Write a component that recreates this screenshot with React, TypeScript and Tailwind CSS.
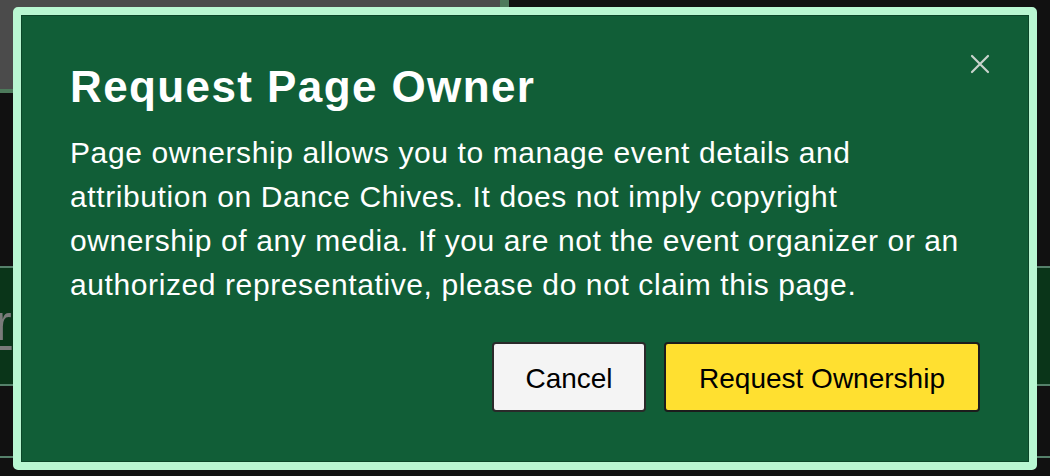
export default function App() {
  return (
    <div className="relative h-[476px] w-[1050px] overflow-hidden bg-[#111111] font-['Liberation_Sans',Arial,sans-serif]">
      {/* page behind the modal */}
      <div className="flex h-[93px]">
        <div className="h-[93px] w-[509px] border-b-4 border-r-[9px] border-[#4d7a5b] bg-[#4b4b4b]" />
        <div className="flex-1" />
      </div>
      <div className="h-[173px]" />
      <div className="flex h-[120px] items-start overflow-hidden border-y-2 border-[#55806a] bg-[#0a3519]">
        <span className="-ml-[5px] mt-[30px] text-[50px] leading-[50px] text-[#7a7a7a] underline decoration-[4px] underline-offset-[6px]">
          r
        </span>
      </div>
      <div className="h-[72px] border-b-2 border-[#55806a]" />

      {/* modal */}
      <div className="absolute left-[13px] top-[7px] flex h-[463px] w-[1024px] flex-col rounded-[5px] border-8 border-[#b9f7d2] bg-[#115e37] px-[49px] pt-[48px] shadow-[inset_0_0_0_1px_rgba(0,0,0,0.25)]">
        <button className="absolute right-[38px] top-[38px] text-[#c9d3cc]">
          <svg width="22" height="22" viewBox="0 0 22 22" fill="none" stroke="currentColor" strokeWidth="2.2" strokeLinecap="round">
            <path d="M3 3l16 16M19 3L3 19" />
          </svg>
        </button>
        <h2 className="text-[44px] font-bold leading-[48px] tracking-[1.4px] text-white">
          Request Page Owner
        </h2>
        <p className="mt-[20px] text-[30px] leading-[44px] tracking-[0.6px] text-white">
          Page ownership allows you to manage event details and attribution on Dance Chives. It does not imply copyright ownership of any media. If you are not the event organizer or an authorized representative, please do not claim this page.
        </p>
        <div className="mt-[35px] flex justify-end gap-[18px]">
          <button className="h-[70px] w-[154px] rounded-[4px] border-2 border-[#2a2a2a] bg-[#f4f4f4] pt-[3px] text-[28px] text-black">
            Cancel
          </button>
          <button className="h-[70px] w-[316px] rounded-[4px] border-2 border-[#1c1c1c] bg-[#ffe030] pt-[3px] text-[28px] text-black">
            Request Ownership
          </button>
        </div>
      </div>
    </div>
  );
}
